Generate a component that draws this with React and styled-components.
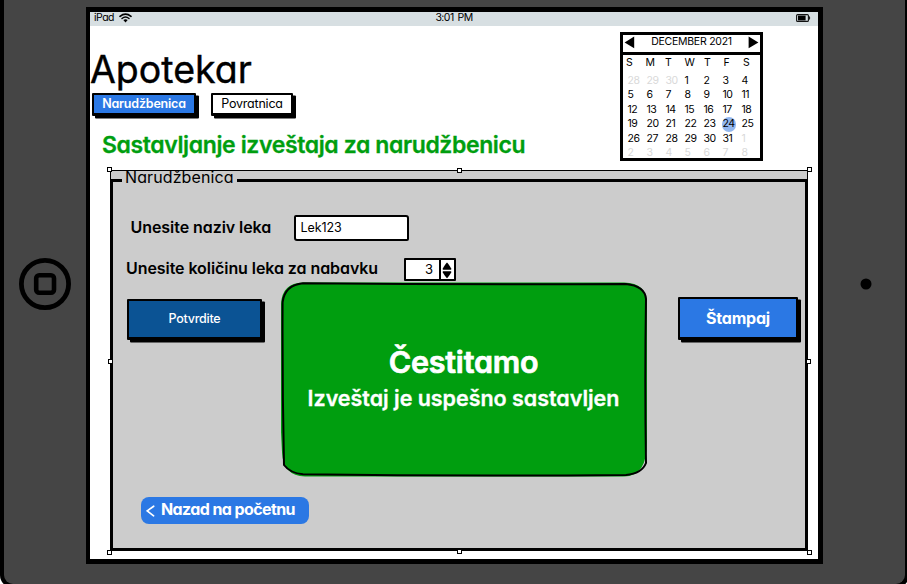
import React from "react";
import styled, { createGlobalStyle, css } from "styled-components";

const GlobalStyle = createGlobalStyle`
  *, *::before, *::after { box-sizing: border-box; }
  body {
    margin: 0;
    overflow: hidden;
    background: #fff;
    color: #000;
    font-family: Inter, "Open Sans", sans-serif;
    font-feature-settings: "cv11";
  }
  button, input { font: inherit; font-feature-settings: inherit; color: inherit; }
`;

/* ---------- device ---------- */

const Viewport = styled.div`
  width: 907px;
  height: 584px;
  overflow: hidden;
`;

const Device = styled.div`
  display: flex;
  width: 909px;
  height: 588px;
  border: 4px solid #000;
  border-top: 0;
  border-radius: 0 0 13px 13px;
  background: #454545;
`;

const Bezel = styled.div`
  flex: 0 0 82px;
  display: flex;
  justify-content: center;
  padding-top: ${(p) => p.$top}px;
  padding-left: ${(p) => p.$nudge || 0}px;
  svg { display: block; flex: none; }
`;

const Screen = styled.div`
  flex: 0 0 737px;
  height: 557px;
  margin-top: 7px;
  border: 5px solid #000;
  border-left-width: 4px;
  background: #fff;
`;

const StatusBar = styled.div`
  display: grid;
  grid-template-columns: 1fr auto 1fr;
  align-items: center;
  height: 14px;
  padding: 0 7px 2px 4px;
  background: #d7dfe2;
  font-size: 10.5px;
  line-height: 12px;
  letter-spacing: -0.5px;
`;

const Clock = styled.span`
  padding-left: 3px;
  letter-spacing: -0.55px;
  word-spacing: 1.5px;
`;

const Carrier = styled.div`
  display: flex;
  align-items: center;
  gap: 5px;
  svg { display: block; }
`;

const BatterySlot = styled.div`
  display: flex;
  justify-content: flex-end;
  svg { display: block; }
`;

/* ---------- page header ---------- */

const Header = styled.header`
  display: flex;
  justify-content: space-between;
  height: 144px;
  padding-right: 55px;
`;

const Brand = styled.h1`
  margin: 20.5px 0 0;
  font-size: 37.5px;
  font-weight: 400;
  line-height: 46px;
  letter-spacing: 0;
  -webkit-text-stroke: 0.4px;
`;

const Tabs = styled.nav`
  display: flex;
  gap: 15px;
  padding-left: 2px;
`;

const SketchButton = styled.button`
  flex: none;
  width: ${(p) => p.$w}px;
  height: ${(p) => p.$h}px;
  margin: ${(p) => p.$margin || "0"};
  padding: 1px 0 0;
  border: 2px solid #000;
  border-bottom-width: 3px;
  border-radius: 1px;
  box-shadow: 3px 2.5px 0 #000;
  background: ${(p) => p.$bg};
  color: ${(p) => p.$fg || "#fff"};
  font-size: ${(p) => p.$size || 12.5}px;
  font-weight: ${(p) => p.$weight || 400};
  letter-spacing: ${(p) => p.$track || 0}px;
  line-height: 16px;
  text-align: center;
`;

const Heading = styled.h2`
  margin: 14px 0 0 12px;
  color: #009e0f;
  font-size: 23px;
  font-weight: 600;
  line-height: 30px;
  letter-spacing: -0.38px;
  white-space: nowrap;
  -webkit-text-stroke: 0.3px;
`;

/* ---------- calendar ---------- */

const Calendar = styled.section`
  width: 143px;
  height: 129px;
  margin-top: 6px;
  border: 3px solid #000;
`;

const MonthBar = styled.div`
  display: flex;
  justify-content: space-between;
  height: 20px;
  padding: 1px 1px 0 1px;
  border-bottom: 3px solid #000;
  font-size: 10.5px;
  line-height: 11px;
  letter-spacing: -0.25px;
  svg { display: block; margin-top: 0; }
`;

const Weekdays = styled.div`
  display: grid;
  grid-template-columns: repeat(7, 19.5px);
  padding: 1px 0 0 3px;
  font-size: 10.5px;
  line-height: 13px;
`;

const Days = styled.div`
  display: grid;
  grid-template-columns: repeat(7, 19px);
  grid-auto-rows: 14.4px;
  padding: 5px 0 0 4.5px;
  font-size: 10.5px;
  line-height: 14.4px;
  letter-spacing: -0.4px;
`;

const Day = styled.span`
  justify-self: start;
  color: ${(p) => (p.$muted ? "#d9d9d9" : "#000")};
  ${(p) => p.$selected && css`
    width: 14.4px;
    margin-left: -1px;
    padding-left: 1px;
    border-radius: 50%;
    background: #92b7ee;
  `}
`;

/* ---------- order panel ---------- */

const Panel = styled.section`
  position: relative;
  width: 698px;
  height: 381px;
  margin-left: 20px;
  border: 1px solid #000;
  background: #ccc;
`;

const Handle = styled.i`
  position: absolute;
  left: ${(p) => p.$x}px;
  top: ${(p) => p.$y}px;
  width: 5px;
  height: 5px;
  border: 1px solid #000;
  background: #fff;
`;

const LegendRow = styled.div`
  display: flex;
  height: 13px;
`;

const LegendLine = styled.span`
  height: 5px;
  margin-top: 8px;
  border-top: 3px solid #000;
  ${(p) => p.$start
    ? css`flex: 0 0 11px; border-left: 2px solid #000;`
    : css`flex: 1; border-right: 2px solid #000;`}
`;

const Legend = styled.span`
  width: 115px;
  padding-left: 3px;
  font-size: 16px;
  line-height: 13px;
  letter-spacing: 0.1px;
  white-space: nowrap;
`;

const Frame = styled.div`
  height: 366px;
  padding-top: 31.5px;
  border: solid #000;
  border-width: 0 2px 2px;
`;

const Field = styled.div`
  display: flex;
  align-items: center;
  height: ${(p) => p.$h}px;
  margin-top: ${(p) => p.$gap || 0}px;
  padding-left: ${(p) => p.$indent}px;
`;

const FieldLabel = styled.label`
  flex: 0 0 ${(p) => p.$w}px;
  padding-bottom: ${(p) => p.$lift}px;
  font-size: 16px;
  font-weight: 600;
  line-height: 20px;
  letter-spacing: ${(p) => p.$track || 0}px;
  white-space: nowrap;
`;

const TextInput = styled.input`
  width: 115px;
  height: 26px;
  padding: 0 0 2px 5px;
  border: 2px solid #000;
  border-radius: 2px 3px 2px 3px;
  outline: 0;
  background: #fff;
  font-size: 12.5px;
  letter-spacing: -0.1px;
`;

const Stepper = styled.div`
  display: flex;
  width: 52.5px;
  height: 23px;
  border: 2px solid #000;
  border-radius: 1px;
  background: #fff;
`;

const StepperValue = styled.span`
  flex: 1;
  padding-right: 5.5px;
  border-right: 2px solid #000;
  font-size: 13px;
  line-height: 19px;
  text-align: right;
`;

const StepperArrows = styled.span`
  flex: 0 0 13.5px;
  display: grid;
  place-items: center;
  padding-top: 1px;
  svg { display: block; }
`;

const Stage = styled.div`
  display: flex;
  align-items: flex-start;
  height: 196px;
`;

const Message = styled.div`
  position: relative;
  isolation: isolate;
  flex: none;
  width: 366px;
  height: 195px;
  margin: 1px 0 0 18.5px;
  padding-top: 61px;
  color: #fff;
  text-align: center;
`;

const MessageShape = styled.svg`
  position: absolute;
  inset: 0;
  z-index: -1;
`;

const MessageTitle = styled.div`
  font-size: 30.5px;
  font-weight: 600;
  line-height: 37px;
  letter-spacing: -0.2px;
  -webkit-text-stroke: 0.7px;
`;

const MessageText = styled.div`
  font-size: 21.5px;
  font-weight: 600;
  line-height: 37px;
  letter-spacing: -0.03px;
  white-space: nowrap;
  -webkit-text-stroke: 0.3px;
`;

const BackButton = styled.button`
  display: flex;
  align-items: center;
  gap: 6px;
  width: 168px;
  height: 27px;
  margin: 20px 0 0 28px;
  padding: 0 0 3px 5px;
  border: 0;
  border-radius: 8px;
  background: #2b78e4;
  color: #fff;
  font-size: 16px;
  font-weight: 700;
  line-height: 20px;
  letter-spacing: -0.6px;
  white-space: nowrap;
  svg { display: block; margin-top: 3px; }
`;

const HomeIcon = () => (
  <svg width="52" height="52" viewBox="0 0 52 52" fill="none" stroke="#000">
    <circle cx="26" cy="26" r="23.6" strokeWidth="4.8" />
    <rect x="17.2" y="17.2" width="17.8" height="17.6" rx="3" strokeWidth="4.6" />
  </svg>
);

const CameraIcon = () => (
  <svg width="12" height="12" viewBox="0 0 12 12">
    <circle cx="6" cy="6" r="5.5" />
  </svg>
);

const WifiIcon = () => (
  <svg width="13" height="10" viewBox="0 0 13 10" fill="none" stroke="#000" strokeLinecap="round">
    <path d="M1 3.3Q6.5-1 12 3.3" strokeWidth="1.7" />
    <path d="M3 5.5Q6.5 2.6 10 5.5" strokeWidth="1.5" />
    <path d="M4.3 7.1Q6.5 5.2 8.7 7.1L6.5 9.5Z" fill="#000" stroke="none" />
  </svg>
);

const BatteryIcon = () => (
  <svg width="15" height="8" viewBox="0 0 15 8">
    <rect x="0.6" y="0.6" width="11.8" height="6.8" rx="1" fill="none" stroke="#111" strokeWidth="1.1" />
    <rect x="2" y="1.6" width="7.6" height="4.8" />
    <path d="M13 2.2Q14.6 4 13 5.8" fill="none" stroke="#111" />
  </svg>
);

const MonthArrow = ({ next }) => (
  <svg width="11" height="13" viewBox="0 0 11 13">
    <path d={next ? "M0.6 0.5L10.4 6.5L0.6 12.300Z" : "M10.200 0.500L0.600 6.500L10.200 12.300Z"} />
  </svg>
);

const StepIcon = () => (
  <svg width="10" height="17" viewBox="0 0 10 17">
    <path d="M5 0.6Q6.3 1.6 9.2 6.6V7.8H0.8V6.6Q3.7 1.6 5 0.6Z" />
    <path d="M5 16.2Q3.7 15.2 0.8 10.4V9.2H9.2V10.4Q6.3 15.2 5 16.2Z" />
  </svg>
);

const BackIcon = () => (
  <svg width="9" height="12" viewBox="0 0 9 12" fill="none" stroke="#fff" strokeWidth="1.7" strokeLinecap="round">
    <path d="M7.7 1.2L1.2 5.9L7.6 10.8" />
  </svg>
);

const WEEKDAYS = ["S", "M", "T", "W", "T", "F", "S"];
const DAYS = [
  ...[28, 29, 30].map((n) => ({ n, muted: true })),
  ...Array.from({ length: 31 }, (_, i) => ({ n: i + 1, selected: i + 1 === 24 })),
  ...Array.from({ length: 8 }, (_, i) => ({ n: i + 1, muted: true })),
];
const HANDLES = [
  [-4, -4], [346, -3], [696, -4],
  [-3, 188], [695, 188],
  [-4, 379], [346, 378], [696, 379],
];

export default function App() {
  return (
    <Viewport>
      <GlobalStyle />
      <Device>
        <Bezel $top={258}><HomeIcon /></Bezel>
        <Screen>
          <StatusBar>
            <Carrier>iPad <WifiIcon /></Carrier>
            <Clock>3:01 PM</Clock>
            <BatterySlot><BatteryIcon /></BatterySlot>
          </StatusBar>

          <Header>
            <div>
              <Brand>Apotekar</Brand>
              <Tabs>
                <SketchButton $w={104} $h={23.5} $bg="#2b78e4" $weight={600} $track={-0.2}>Narudžbenica</SketchButton>
                <SketchButton $w={82} $h={23.5} $bg="#fff" $fg="#000" $track={-0.2}>Povratnica</SketchButton>
              </Tabs>
              <Heading>Sastavljanje izveštaja za narudžbenicu</Heading>
            </div>

            <Calendar>
              <MonthBar>
                <MonthArrow />
                <span>DECEMBER 2021</span>
                <MonthArrow next />
              </MonthBar>
              <Weekdays>{WEEKDAYS.map((d, i) => <span key={i}>{d}</span>)}</Weekdays>
              <Days>
                {DAYS.map((d, i) => (
                  <Day key={i} $muted={d.muted} $selected={d.selected}>{d.n}</Day>
                ))}
              </Days>
            </Calendar>
          </Header>

          <Panel>
            <LegendRow>
              <LegendLine $start />
              <Legend>Narudžbenica</Legend>
              <LegendLine />
            </LegendRow>
            <Frame>
              <Field $h={25.5} $indent={17.5}>
                <FieldLabel $w={163} $lift={2.5} $track={-0.06}>Unesite naziv leka</FieldLabel>
                <TextInput defaultValue="Lek123" />
              </Field>
              <Field $h={22.5} $gap={17.5} $indent={13}>
                <FieldLabel $w={277.5} $lift={3} $track={-0.07}>Unesite količinu leka za nabavku</FieldLabel>
                <Stepper>
                  <StepperValue>3</StepperValue>
                  <StepperArrows><StepIcon /></StepperArrows>
                </Stepper>
              </Field>
              <Stage>
                <SketchButton $w={135} $h={41.5} $bg="#0b5394" $weight={500} $track={-0.25} $margin="17.5px 0 0 14px">Potvrdite</SketchButton>
                <Message>
                  <MessageShape width="366" height="195" viewBox="0 0 366 195">
                    <path fill="#009e0f" d="M22 0.5H343Q366 1 366 22V160Q366 194.500 343 194.500H24Q2 194 1 170L0 150V22Q1 1 22 0.500Z" />
                    <path fill="none" stroke="#000" strokeWidth="2" d="M22 1.300Q180 2.600 345 2Q364 4 365 17Q363.600 100 365 181Q361 191.500 345 193Q180 194.500 22 192.300Q9 191 3 183Q1.200 100 1.600 20Q4 3 22 1.300Z" />
                  </MessageShape>
                  <MessageTitle>Čestitamo</MessageTitle>
                  <MessageText>Izveštaj je uspešno sastavljen</MessageText>
                </Message>
                <SketchButton $w={120} $h={43.5} $bg="#2b78e4" $weight={700} $size={16} $track={-0.2} $margin="15.5px 0 0 31.5px">Štampaj</SketchButton>
              </Stage>
              <BackButton><BackIcon />Nazad na početnu</BackButton>
            </Frame>
            {HANDLES.map(([x, y]) => <Handle key={`${x}:${y}`} $x={x} $y={y} />)}
          </Panel>
        </Screen>
        <Bezel $top={278} $nudge={4}><CameraIcon /></Bezel>
      </Device>
    </Viewport>
  );
}
